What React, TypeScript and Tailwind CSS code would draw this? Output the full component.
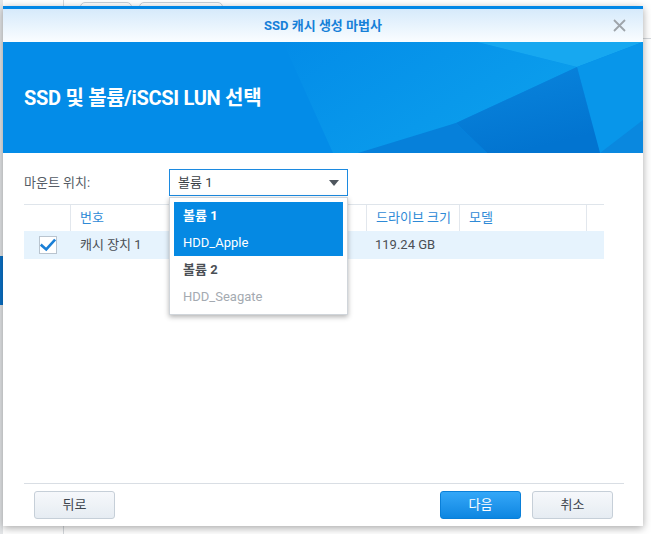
import React from "react";

const font = "font-['Roboto','Noto_Sans_CJK_KR',sans-serif]";

type Column = { key: string; label: string; width: string };

const columns: Column[] = [
  { key: "check", label: "", width: "w-[47px]" },
  { key: "no", label: "번호", width: "w-[169px]" },
  { key: "type", label: "디스크 드라이브", width: "w-[127px]" },
  { key: "size", label: "드라이브 크기", width: "w-[93px]" },
  { key: "model", label: "모델", width: "w-[127px]" },
  { key: "rest", label: "", width: "flex-1" },
];

export default function App() {
  return (
    <div className={`relative w-[651px] h-[534px] overflow-hidden bg-white ${font}`}>
      <Backdrop />

      {/* wizard window */}
      <div className="absolute left-[3px] top-[6px] w-[640px] h-[520px] flex flex-col bg-white border-t-[3px] border-[#0287e6] shadow-[0_2px_8px_rgba(0,0,0,0.35)]">
        <div className="relative h-[33px] shrink-0 flex items-center justify-center bg-gradient-to-b from-[#d6eafb] to-[#fafdff]">
          <span className="text-[13px] font-bold text-[#1680d8]">SSD 캐시 생성 마법사</span>
          <CloseIcon />
        </div>

        <Banner />

        <div className="flex-1 flex flex-col px-[21px]">
          <div className="flex items-center h-[27px] mt-[16px]">
            <span className="w-[145px] text-[13px] text-[#555c66]">마운트 위치:</span>
            <div className="w-[179px] h-[27px] border border-[#1c8ae0] flex items-center justify-between pl-[8px] pr-[8px]">
              <span className="text-[13px] text-[#3a3f45]">볼륨 1</span>
              <span className="w-0 h-0 border-l-[5px] border-r-[5px] border-t-[6px] border-l-transparent border-r-transparent border-t-[#4f565e]" />
            </div>
          </div>

          <div className="w-[580px] mt-[8px]">
            <div className="flex h-[27px] border-t border-[#dfe5eb]">
              {columns.map((c, i) => (
                <div
                  key={c.key}
                  className={`${c.width} flex items-center pl-[9px] text-[13px] text-[#2f8ad6] ${i < columns.length - 1 ? "border-r border-[#e2e7ed]" : ""}`}
                >
                  {c.label}
                </div>
              ))}
            </div>
            <div className="flex h-[28px] bg-[#e6f3fd] items-center">
              <div className="w-[47px] flex justify-center">
                <Checkbox />
              </div>
              <div className="w-[169px] pl-[9px] text-[13px] text-[#4a4f55]">캐시 장치 1</div>
              <div className="w-[127px]" />
              <div className="w-[93px] pl-[8px] text-[13px] text-[#4a4f55]">119.24 GB</div>
            </div>
          </div>

          <div className="flex-1" />

          <div className="border-t border-[#d9dee4] w-[600px] flex justify-between pt-[7px] pb-[7px]">
            <FooterButton label="뒤로" className="ml-[10px]" />
            <div className="flex gap-[11px] mr-[11px]">
              <FooterButton label="다음" primary />
              <FooterButton label="취소" />
            </div>
          </div>
        </div>
      </div>

      {/* open select menu */}
      <div className="absolute left-[169px] top-[197px] w-[179px] h-[118px] bg-white border border-[#d0d5da] shadow-[0_2px_5px_rgba(0,0,0,0.3)] p-[4px] flex flex-col">
        <div className="bg-[#0589e3] h-[54px] flex flex-col">
          <div className="h-[27px] flex items-center pl-[9px] text-[13px] font-bold text-white">볼륨 1</div>
          <div className="h-[27px] flex items-center pl-[9px] text-[13px] text-white">HDD_Apple</div>
        </div>
        <div className="h-[27px] flex items-center pl-[9px] text-[13px] font-bold text-[#4a4f55]">볼륨 2</div>
        <div className="h-[27px] flex items-center pl-[9px] text-[13px] text-[#a4aab1]">HDD_Seagate</div>
      </div>
    </div>
  );
}

function Backdrop() {
  return (
    <>
      <div className="absolute left-[63px] top-0 bottom-0 w-px bg-[#d4d8dc]" />
      <div className="absolute left-[80px] top-[2px] w-[52px] h-[20px] rounded-[5px] border border-[#c9d0d8] bg-white" />
      <div className="absolute left-[139px] top-[2px] w-[84px] h-[20px] rounded-[5px] border border-[#c9d0d8] bg-white" />
      <div className="absolute left-0 top-0 bottom-0 w-[3px] bg-[#e4e6e8]" />
      <div className="absolute left-0 top-[256px] w-[3px] h-[49px] bg-[#0a72c8]" />
      <div className="absolute right-0 top-[38px] w-[10px] h-px bg-[#d4d8dc]" />
    </>
  );
}

function CloseIcon() {
  return (
    <svg
      className="absolute right-[17px] top-[10px]"
      width="13"
      height="13"
      viewBox="0 0 13 13"
      fill="none"
      stroke="#9ea4aa"
      strokeWidth="1.8"
    >
      <path d="M1 1L12 12M12 1L1 12" />
    </svg>
  );
}

function Banner() {
  return (
    <div className="relative h-[111px] shrink-0 bg-[#038ce8] flex items-center pl-[21px]">
      <svg className="absolute inset-0" width="640" height="111" viewBox="0 0 640 111">
        <defs>
          <linearGradient id="lite" x1="0" y1="0" x2="1" y2="0.6">
            <stop offset="0" stopColor="#038ce8" />
            <stop offset="1" stopColor="#0fa6ee" />
          </linearGradient>
          <linearGradient id="dark" x1="0" y1="0" x2="0.4" y2="1">
            <stop offset="0" stopColor="#0a86de" />
            <stop offset="1" stopColor="#0274d0" />
          </linearGradient>
        </defs>
        <polygon points="280,0 474,0 574,25 453,81 380,111 330,111" fill="url(#lite)" opacity="0.75" />
        <polygon points="474,0 640,0 574,25" fill="#17a8f0" />
        <polygon points="574,25 640,0 640,111 597,111" fill="#0896ea" />
        <polygon points="597,111 640,78 640,111" fill="#0a88df" />
        <polygon points="453,81 574,25 597,111 484,111" fill="url(#dark)" />
        <polygon points="355,111 453,81 484,111" fill="#0680da" />
      </svg>
      <h1 className="relative text-[20px] font-bold text-white tracking-[-0.3px]">SSD 및 볼륨/iSCSI LUN 선택</h1>
    </div>
  );
}

function Checkbox() {
  return (
    <div className="w-[18px] h-[18px] bg-white border border-[#b9c4cf] flex items-center justify-center">
      <svg width="18" height="16" viewBox="0 0 18 16" fill="none" stroke="#1a7fd6" strokeWidth="3" strokeLinecap="square">
        <path d="M2 8.5L7 13L16 3" />
      </svg>
    </div>
  );
}

function FooterButton({ label, primary, className = "" }: { label: string; primary?: boolean; className?: string }) {
  const look = primary
    ? "bg-gradient-to-b from-[#33a7f8] to-[#0b86e1] border-[#0a7fd8] text-white"
    : "bg-gradient-to-b from-[#f6f8fb] to-[#e6ecf2] border-[#c6cfd8] text-[#3d454e]";
  return (
    <button className={`w-[81px] h-[28px] rounded-[3px] border text-[13px] flex items-center justify-center ${look} ${className}`}>
      {label}
    </button>
  );
}
